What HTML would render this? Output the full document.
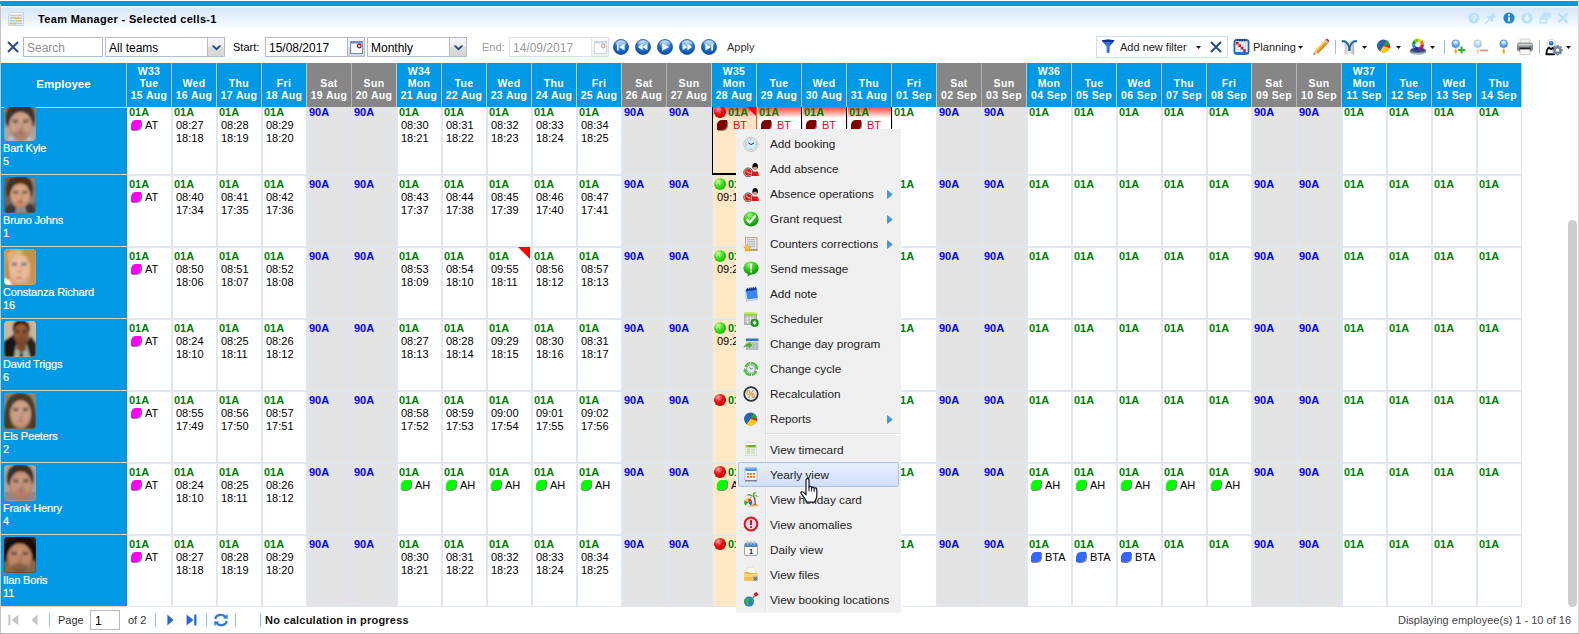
<!DOCTYPE html>
<html><head><meta charset="utf-8"><title>Team Manager</title>
<style>
*{box-sizing:border-box;margin:0;padding:0}
html,body{width:1579px;height:634px;overflow:hidden;background:#fff}
body{position:relative;font-family:"Liberation Sans",sans-serif;font-size:11px;color:#000}
div,i,span,svg{position:absolute}
span{position:static}
.topblue{left:0;top:1px;width:1579px;height:5px;background:#0099e5}
.titlebar{left:1px;top:6px;width:1577px;height:26px;background:linear-gradient(#ffffff 0px,#d6e7fa 2px,#e3effc 10px,#ffffff 24px)}
.lborder{left:0;top:4px;width:1px;height:630px;background:#c4c4c4}
.rborder{left:1578px;top:1px;width:1px;height:633px;background:#d8d8d8}
.bborder{left:0;top:633px;width:1579px;height:1px;background:#b4b4b4}
.title{left:38px;top:12px;letter-spacing:.33px;font-size:11px;font-weight:bold;color:#000;white-space:nowrap;line-height:14px}
/* header */
.hdr{top:63px;height:44px;background:#0099e5;color:#fff;font-weight:bold;font-size:10.5px;text-align:center}
.hdr.we{background:#868686}
.hsep{top:63px;width:1px;height:44px;background:#c6c6c6}
.hsep.wes{background:#b4b4b4}
.ht{left:-10px;right:-10px;top:2px;line-height:12px;white-space:nowrap;position:absolute;letter-spacing:.35px}
.hemp{left:0;right:0;top:15px;font-size:11.5px;line-height:13px}
/* grid */
.grid{left:0;top:107px;width:1567px;height:500px;overflow:hidden}
.wecol{top:0;width:44px;height:500px;background:#e4e4e4}
.peach{top:0;width:43px;height:500px;background:#ffe8c6}
.vl{top:0;width:2px;height:500px;background:#dfe7f6}
.hl{left:127px;width:1395px;height:2px;background:#dfe7f6}
.empcol{left:1px;top:0;width:126px;height:500px;background:#0099e5}
.empline{left:1px;width:126px;height:1px;background:#c9d3da}
.emp{left:1px;width:126px;height:72px;color:#fff}
.face{left:3px;top:2px;width:32px;height:36px;border-radius:4px;overflow:hidden;background:#987}
.ename{left:2px;top:39px;font-size:11px;line-height:13px;white-space:nowrap;letter-spacing:-.15px;-webkit-text-stroke:.2px #fff}
.c{width:43px;height:70px;padding:3px 0 0 2px;font-size:11px;line-height:13px;white-space:nowrap;font-weight:bold;overflow:visible}
.c.g{color:#008000}
.c.b{color:#0000ff}
.tm{font-weight:normal;color:#000;margin-left:2px}
.lt{font-weight:normal;color:#000;margin-left:4px}
.lf{position:relative;display:inline-block;width:10px;height:10px;border-radius:5px 0 5px 0;vertical-align:-1px;margin-left:2px;box-shadow:1px 1px 0 #888}
.flag{position:absolute;right:0;top:0;width:0;height:0;border-top:12px solid #ff0000;border-left:12px solid transparent}
.ball{position:absolute;left:1px;top:3px;width:12px;height:12px;border-radius:6px}
.rb{background:radial-gradient(circle at 35% 28%,#ffa8a8 0,#e81414 38%,#a00000 100%)}
.gb{background:radial-gradient(circle at 35% 30%,#d8ffb0 0,#40e020 40%,#10a000 100%)}
.redgrad{height:11px;background:linear-gradient(#ee5048,#f37a72 30%,#f9bab4 65%,rgba(255,255,255,0))}
.bl{background:#000}
.sthumb{left:1568px;top:220px;width:9px;height:387px;border-radius:5px;background:#cdcdcd}
/* toolbar */
.inp{top:37px;height:20px;border:1px solid #b5b8c8;background:#fff;overflow:hidden}
.inp.dis{border-color:#dcdee8}
.inp .it{position:absolute;left:3px;top:3px;font-size:12px;line-height:14px;color:#000;white-space:nowrap}
.inp .ph{position:absolute;left:3px;top:3px;font-size:12px;line-height:14px;color:#8f8f8f}
.trg{right:0;top:0;width:17px;height:18px;border-left:1px solid #b5b8c8;background:linear-gradient(#f6f6f6 0,#efefef 45%,#dcdcdc 55%,#d6d6d6 100%)}
.lbl{top:40px;font-size:11px;line-height:14px;white-space:nowrap;color:#000}
/* menu */
.menu{left:736px;top:129px;width:165px;height:484px;background:#f0f0f0}
.msep{left:29px;top:3px;width:1px;height:478px;background:#e0e0e0;border-right:1px solid #fff;width:2px}
.mhl{left:30px;top:304px;width:133px;height:2px;background:#e0e0e0;border-bottom:1px solid #fff}
.mhov{left:2px;top:333px;width:161px;height:25px;background:linear-gradient(#e6effc,#d0e0f8);border:1px solid #a8c4ec;border-radius:2px}
.mi{left:34px;font-size:11.75px;line-height:16px;color:#222;white-space:nowrap}
.tsep{top:40px;width:1px;height:14px;background:#8fc0f4}
.fbox{left:1096px;top:36px;width:132px;height:22px;border:1px solid #d0def0;background:#fff}
/* bottom */
.bsep{top:613px;width:1px;height:14px;background:#8fc0f4}
.blbl{top:613px;font-size:11px;line-height:14px;white-space:nowrap;color:#333}
.binp{left:90px;top:610px;width:30px;height:20px;border:1px solid #b5b8c8;background:#fff}
.binp span{position:absolute;left:4px;top:3px;font-size:12px;line-height:14px}

</style></head>
<body>
<div class="topblue"></div><div class="titlebar"></div><div class="lborder"></div><div class="rborder"></div><div class="bborder"></div><div class="title">Team Manager - Selected cells-1</div>
<!-- toolbar left -->
<svg style="left:6px;top:40px" width="14" height="14" viewBox="0 0 14 14"><path d="M2 2 L12 12 M12 2 L2 12" stroke="#2b4a96" stroke-width="2.1" fill="none"/></svg>
<div class="inp" style="left:23px;width:80px"><span class="ph">Search</span></div>
<div class="inp" style="left:105px;width:120px"><span class="it">All teams</span><div class="trg"><svg width="11" height="7" viewBox="0 0 11 7" style="left:3px;top:7px"><path d="M0.5 0.5 L5.5 5.5 L10.5 0.5 L8 0.5 L5.5 3 L3 0.5 Z" fill="#1f3f8f"/></svg></div></div>
<div class="lbl" style="left:233px">Start:</div>
<div class="inp" style="left:265px;width:100px"><span class="it">15/08/2017</span><div class="trg"><svg width="13" height="13" viewBox="0 0 13 13" style="left:2px;top:3px"><rect x="0.5" y="0.5" width="12" height="12" fill="#f4f4f4" stroke="#6e8fc0"/><rect x="0.5" y="0.5" width="12" height="2" fill="#6e8fc0"/><g fill="#fff"><rect x="2" y="4" width="2" height="2"/><rect x="5" y="4" width="2" height="2"/><rect x="2" y="7" width="2" height="2"/><rect x="5" y="7" width="2" height="2"/><rect x="8" y="7" width="2" height="2"/><rect x="2" y="10" width="2" height="1.5"/><rect x="5" y="10" width="2" height="1.5"/><rect x="8" y="10" width="2" height="1.5"/></g><circle cx="9.3" cy="5" r="1.8" fill="#fff" stroke="#a00000" stroke-width="1.2"/></svg></div></div>
<div class="inp" style="left:367px;width:100px"><span class="it">Monthly</span><div class="trg"><svg width="11" height="7" viewBox="0 0 11 7" style="left:3px;top:7px"><path d="M0.5 0.5 L5.5 5.5 L10.5 0.5 L8 0.5 L5.5 3 L3 0.5 Z" fill="#1f3f8f"/></svg></div></div>
<div class="lbl" style="left:482px;color:#9a9a9a">End:</div>
<div class="inp dis" style="left:509px;width:100px"><span class="it" style="color:#9a9a9a">14/09/2017</span><div class="trg" style="opacity:.35"><svg width="13" height="13" viewBox="0 0 13 13" style="left:2px;top:3px"><rect x="0.5" y="0.5" width="12" height="12" fill="#f4f4f4" stroke="#6e8fc0"/><rect x="0.5" y="0.5" width="12" height="2" fill="#6e8fc0"/><circle cx="9.3" cy="5" r="1.8" fill="#fff" stroke="#a00000" stroke-width="1.2"/></svg></div></div>
<svg width="0" height="0" style="left:0;top:0"><defs>
<radialGradient id="nb" cx="50%" cy="30%" r="75%"><stop offset="0" stop-color="#6fb4ee"/><stop offset="0.55" stop-color="#1d6cc6"/><stop offset="1" stop-color="#0b3f95"/></radialGradient>
<linearGradient id="nbh" x1="0" y1="0" x2="0" y2="1"><stop offset="0" stop-color="#ffffff" stop-opacity=".75"/><stop offset="1" stop-color="#ffffff" stop-opacity="0"/></linearGradient>
</defs></svg>
<svg class="nav" style="left:613px;top:39px" width="16" height="16" viewBox="0 0 16 16"><circle cx="8" cy="8" r="7.6" fill="url(#nb)" stroke="#0b3f95" stroke-width=".6"/><ellipse cx="8" cy="4.6" rx="5.4" ry="3.4" fill="url(#nbh)"/><path d="M4 4.6h1.7v6.8H4zM11.6 4.6v6.8L6.2 8z" fill="#f4f8ff"/></svg>
<svg class="nav" style="left:635px;top:39px" width="16" height="16" viewBox="0 0 16 16"><circle cx="8" cy="8" r="7.6" fill="url(#nb)" stroke="#0b3f95" stroke-width=".6"/><ellipse cx="8" cy="4.6" rx="5.4" ry="3.4" fill="url(#nbh)"/><path d="M7.6 4.8v6.4L2.8 8zM12.4 4.8v6.4L7.6 8z" fill="#f4f8ff"/></svg>
<svg class="nav" style="left:657px;top:39px" width="16" height="16" viewBox="0 0 16 16"><circle cx="8" cy="8" r="7.6" fill="url(#nb)" stroke="#0b3f95" stroke-width=".6"/><ellipse cx="8" cy="4.6" rx="5.4" ry="3.4" fill="url(#nbh)"/><path d="M5.2 4.2v7.6L12.2 8z" fill="#f4f8ff"/></svg>
<svg class="nav" style="left:679px;top:39px" width="16" height="16" viewBox="0 0 16 16"><circle cx="8" cy="8" r="7.6" fill="url(#nb)" stroke="#0b3f95" stroke-width=".6"/><ellipse cx="8" cy="4.6" rx="5.4" ry="3.4" fill="url(#nbh)"/><path d="M3.6 4.8v6.4L8.4 8zM8.4 4.8v6.4L13.2 8z" fill="#f4f8ff"/></svg>
<svg class="nav" style="left:701px;top:39px" width="16" height="16" viewBox="0 0 16 16"><circle cx="8" cy="8" r="7.6" fill="url(#nb)" stroke="#0b3f95" stroke-width=".6"/><ellipse cx="8" cy="4.6" rx="5.4" ry="3.4" fill="url(#nbh)"/><path d="M10.3 4.6H12v6.8h-1.7zM4.4 4.6v6.8L9.8 8z" fill="#f4f8ff"/></svg>
<div class="lbl" style="left:727px;color:#333">Apply</div>
<!--TBRIGHT-->
<div class="fbox"></div>
<svg style="left:1101px;top:39px" width="15" height="15" viewBox="0 0 15 15"><defs><linearGradient id="fn" x1="0" y1="0" x2="1" y2="0"><stop offset="0" stop-color="#1848c8"/><stop offset=".45" stop-color="#3a78ec"/><stop offset="1" stop-color="#0c34a4"/></linearGradient></defs><path d="M0.6 1.6 C0.6 0.4 13.6 0.4 13.6 1.6 L8.6 7.6 V13 C8.6 14.4 5.6 14.4 5.6 13 V7.6Z" fill="url(#fn)"/><ellipse cx="7.1" cy="1.8" rx="6.2" ry="1.3" fill="#0a2f98"/></svg>
<div class="lbl" style="left:1120px;color:#222">Add new filter</div>
<svg style="left:1196px;top:46px" width="5" height="3" viewBox="0 0 5 3"><path d="M0 0H5L2.5 3Z" fill="#111"/></svg>
<svg style="left:1209px;top:40px" width="14" height="14" viewBox="0 0 14 14"><path d="M2 2 L12 12 M12 2 L2 12" stroke="#2b4a96" stroke-width="2" fill="none"/></svg>
<svg style="left:1233px;top:38px" width="17" height="17" viewBox="0 0 17 17"><rect x="1" y="1.4" width="15" height="15" rx="2.4" fill="#3a6fb8" stroke="#1d4a8c" stroke-width=".8"/><rect x="2.4" y="3.4" width="12.2" height="10.6" fill="#eef2f8"/><g stroke="#c2cad8" stroke-width=".6"><path d="M5 3.4v10.6M7.6 3.4v10.6M10.2 3.4v10.6M12.6 3.4v10.6"/></g><g fill="#222"><rect x="4" y="1" width="1" height="2"/><rect x="6.4" y="1" width="1" height="2"/><rect x="8.8" y="1" width="1" height="2"/><rect x="11.2" y="1" width="1" height="2"/></g><path d="M3 4 h2.6 v2.4 h2.4 v2.4 h2.4 v2.4 h2.4 v2.8 h-2.6 v-2.6 h-2.4 v-2.4 h-2.4 v-2.4 h-2.4Z" fill="#e01420"/></svg>
<div class="lbl" style="left:1253px;color:#222">Planning</div>
<svg style="left:1298px;top:46px" width="5" height="3" viewBox="0 0 5 3"><path d="M0 0H5L2.5 3Z" fill="#111"/></svg>
<svg style="left:1312px;top:38px" width="18" height="18" viewBox="0 0 18 18"><path d="M1.4 16.8 L3 12.2 L6 15.2Z" fill="#e8c08a"/><path d="M1.4 16.8 L2 15 L3.2 16.2Z" fill="#333"/><path d="M3 12.2 L13 2.2 L16 5.2 L6 15.2Z" fill="#f4a628"/><path d="M3 12.2 L13 2.2 L14 3.2 L4 13.2Z" fill="#fad27a"/><path d="M5 14.2 L15 4.2 L16 5.2 L6 15.2Z" fill="#d6861a"/><path d="M12.4 2.8 L13.6 1.6 L16.6 4.6 L15.4 5.8Z" fill="#c8c8c8"/><path d="M13.6 1.6 L14.4 0.8 C15.4 0.2 17.6 2.4 17.2 3.6 L16.6 4.6Z" fill="#e8202a"/></svg>
<div class="tsep" style="left:1335px"></div>
<svg style="left:1341px;top:38px" width="17" height="18" viewBox="0 0 17 18"><defs><linearGradient id="yb" x1="0" y1="0" x2="1" y2="0"><stop offset="0" stop-color="#c8c8c8"/><stop offset=".5" stop-color="#f0f0f0"/><stop offset="1" stop-color="#b4b4b4"/></linearGradient></defs><rect x="3.6" y="4" width="9.6" height="12.6" fill="url(#yb)"/><path d="M0.6 2.6 C4 1.6 7 3.4 8.4 7.4 C9.8 3.4 12.8 1.6 16.2 2.6 L15.8 4.2 C12.8 3.8 10.2 5.8 9.6 9.6 V13 H7.2 V9.6 C6.6 5.8 4 3.8 1 4.2Z" fill="#1f5f94"/><path d="M0.6 2.6 C4 1.6 7 3.4 8.4 7.4 C9.8 3.4 12.8 1.6 16.2 2.6 L16 3.2 C12.8 2.6 10 4.4 8.4 8.6 C6.8 4.4 4 2.6 0.8 3.2Z" fill="#3f8fd0"/></svg>
<svg style="left:1362px;top:46px" width="5" height="3" viewBox="0 0 5 3"><path d="M0 0H5L2.5 3Z" fill="#111"/></svg>
<svg style="left:1376px;top:38px" width="16" height="16" viewBox="0 0 16 16"><circle cx="7.5" cy="8" r="6.5" fill="#2a62ad"/><path d="M7.5 8 L10.6 2.3 A6.5 6.5 0 0 1 13.9 7 Z" fill="#2fa33a"/><path d="M7.5 8 L13.9 7 A6.5 6.5 0 0 1 13.8 9.7 Z" fill="#f02020"/><path d="M8 8.6 L14.3 8 L14.2 10.2 Z" fill="#f02020"/><path d="M7.5 8 L13.7 9.9 A6.5 6.5 0 0 1 3.6 13.2 Z" fill="#fbc81a"/></svg>
<svg style="left:1396px;top:46px" width="5" height="3" viewBox="0 0 5 3"><path d="M0 0H5L2.5 3Z" fill="#111"/></svg>
<svg style="left:1409px;top:38px" width="18" height="18" viewBox="0 0 18 18"><defs><linearGradient id="cb" x1="0" y1="0" x2="0" y2="1"><stop offset="0" stop-color="#aab4c8"/><stop offset=".5" stop-color="#5a6a8a"/><stop offset="1" stop-color="#c8d0e0"/></linearGradient></defs><ellipse cx="9" cy="13" rx="8.4" ry="4" fill="url(#cb)"/><ellipse cx="9" cy="12" rx="6.6" ry="2.6" fill="#3a4a78"/><path d="M9 6.6 L9.00 0.60 A6 6 0 0 1 13.24 2.36 Z" fill="#f4d21a"/><path d="M9 6.6 L13.24 2.36 A6 6 0 0 1 15.00 6.60 Z" fill="#f47a14"/><path d="M9 6.6 L15.00 6.60 A6 6 0 0 1 13.24 10.84 Z" fill="#e8141a"/><path d="M9 6.6 L13.24 10.84 A6 6 0 0 1 9.00 12.60 Z" fill="#8a1a9a"/><path d="M9 6.6 L9.00 12.60 A6 6 0 0 1 4.76 10.84 Z" fill="#1a2ab0"/><path d="M9 6.6 L4.76 10.84 A6 6 0 0 1 3.00 6.60 Z" fill="#1a8ae8"/><path d="M9 6.6 L3.00 6.60 A6 6 0 0 1 4.76 2.36 Z" fill="#1a9a2a"/><path d="M9 6.6 L4.76 2.36 A6 6 0 0 1 9.00 0.60 Z" fill="#6ac81a"/><circle cx="9" cy="6.6" r="2.7" fill="#fdfdfd"/></svg>
<svg style="left:1430px;top:46px" width="5" height="3" viewBox="0 0 5 3"><path d="M0 0H5L2.5 3Z" fill="#111"/></svg>
<div class="tsep" style="left:1444px"></div>
<svg style="left:1451px;top:39px;opacity:1" width="16" height="16" viewBox="0 0 16 16"><defs><radialGradient id="lens1451" cx="50%" cy="35%" r="70%"><stop offset="0" stop-color="#cfe6ff"/><stop offset=".6" stop-color="#5fa4f4"/><stop offset="1" stop-color="#2f7be0"/></radialGradient></defs><rect x="4.1" y="8" width="1.2" height="3" fill="#c8c8c8"/><rect x="3.6" y="10.2" width="2.2" height="4.6" rx="1" fill="#f7a81a"/><circle cx="4.7" cy="4.7" r="3.9" fill="url(#lens1451)" stroke="#4a90e8" stroke-width=".5"/><ellipse cx="4.7" cy="3.4" rx="2.4" ry="1.3" fill="#fff" opacity=".5"/><path d="M10.6 7.4v7.2M7 11h7.2" stroke="#2fb41f" stroke-width="2.2"/></svg>
<svg style="left:1473px;top:39px;opacity:.5" width="16" height="16" viewBox="0 0 16 16"><defs><radialGradient id="lens1473" cx="50%" cy="35%" r="70%"><stop offset="0" stop-color="#cfe6ff"/><stop offset=".6" stop-color="#5fa4f4"/><stop offset="1" stop-color="#2f7be0"/></radialGradient></defs><rect x="4.1" y="8" width="1.2" height="3" fill="#c8c8c8"/><rect x="3.6" y="10.2" width="2.2" height="4.6" rx="1" fill="#f7a81a"/><circle cx="4.7" cy="4.7" r="3.9" fill="url(#lens1473)" stroke="#4a90e8" stroke-width=".5"/><ellipse cx="4.7" cy="3.4" rx="2.4" ry="1.3" fill="#fff" opacity=".5"/><path d="M7 11.4h8" stroke="#e8283a" stroke-width="1.8"/></svg>
<svg style="left:1499px;top:39px;opacity:1" width="16" height="16" viewBox="0 0 16 16"><defs><radialGradient id="lens1499" cx="50%" cy="35%" r="70%"><stop offset="0" stop-color="#cfe6ff"/><stop offset=".6" stop-color="#5fa4f4"/><stop offset="1" stop-color="#2f7be0"/></radialGradient></defs><rect x="4.1" y="8" width="1.2" height="3" fill="#c8c8c8"/><rect x="3.6" y="10.2" width="2.2" height="4.6" rx="1" fill="#f7a81a"/><circle cx="4.7" cy="4.7" r="3.9" fill="url(#lens1499)" stroke="#4a90e8" stroke-width=".5"/><ellipse cx="4.7" cy="3.4" rx="2.4" ry="1.3" fill="#fff" opacity=".5"/></svg>
<svg style="left:1517px;top:38px" width="16" height="18" viewBox="0 0 16 18"><rect x="3" y="1" width="10" height="5" fill="#f0f2f0" stroke="#b8bcb8" stroke-width=".6"/><rect x="0.6" y="5" width="14.8" height="8" rx="1.4" fill="#8e8e8e" stroke="#5a5a5a" stroke-width=".6"/><rect x="0.9" y="5.4" width="14.2" height="2.4" rx="1" fill="#c8c8c8"/><rect x="2.4" y="9.6" width="11.2" height="2.6" fill="#1a1a1a"/><rect x="3" y="11.4" width="10" height="5.4" fill="#f6f6f6" stroke="#b4b4b4" stroke-width=".6"/><rect x="12.4" y="7.6" width="1.8" height="1" fill="#3a78e8"/><rect x="12.8" y="9" width="1.2" height=".8" fill="#2aaa2a"/></svg>
<div class="tsep" style="left:1539px"></div>
<svg style="left:1545px;top:38px" width="18" height="18" viewBox="0 0 18 18"><circle cx="6.2" cy="5.4" r="4.3" fill="#fbfbfb" stroke="#cfcfcf" stroke-width=".9"/><circle cx="6.2" cy="5.2" r="2.2" fill="#1560d8"/><circle cx="6.2" cy="4.8" r="1" fill="#5ab0ff"/><path d="M1.4 16.2 C1.6 12 2.6 10.2 4 9.6 L6.2 11.2 L8.4 9.6 C9.4 10 10 10.8 10.2 11.6 L9.4 16.2Z" fill="#fdfdfd" stroke="#0a0a0a" stroke-width="1.9" stroke-linejoin="round"/><g transform="translate(12.6 12.2)"><g fill="#7088a4"><rect x="-1.3" y="-5.2" width="2.6" height="10.4" rx=".6" transform="rotate(0)"/><rect x="-1.3" y="-5.2" width="2.6" height="10.4" rx=".6" transform="rotate(45)"/><rect x="-1.3" y="-5.2" width="2.6" height="10.4" rx=".6" transform="rotate(90)"/><rect x="-1.3" y="-5.2" width="2.6" height="10.4" rx=".6" transform="rotate(135)"/></g><circle r="3.7" fill="#7088a4"/><circle r="1.6" fill="#fff"/></g></svg>
<svg style="left:1566px;top:46px" width="5" height="3" viewBox="0 0 5 3"><path d="M0 0H5L2.5 3Z" fill="#111"/></svg>
<svg style="left:1468px;top:12px" width="12" height="12" viewBox="0 0 12 12" fill="#b9e2fa" stroke="none"><circle cx="6" cy="6" r="5.6"/><text x="6" y="9.4" font-family="Liberation Sans" font-weight="bold" font-size="9.5" text-anchor="middle" fill="#eef7fe">?</text></svg>
<svg style="left:1485px;top:12px" width="12" height="12" viewBox="0 0 12 12" fill="#b9e2fa" stroke="none"><path d="M7 0.2 L11.8 5 L10.4 5.8 L9.2 5.4 L7.8 7.2 L8 9.2 L6.8 10 L4.9 8.1 L0.9 12 L0 11.1 L3.9 7.1 L2 5.2 L2.8 4 L4.8 4.2 L6.6 2.8 L6.2 1.6Z"/></svg>
<svg style="left:1503px;top:12px" width="12" height="12" viewBox="0 0 12 12" fill="#2486c6" stroke="none"><circle cx="6" cy="6" r="5.6"/><rect x="5.2" y="4.8" width="1.7" height="4.6" fill="#fff"/><circle cx="6.05" cy="3" r="1" fill="#fff"/></svg>
<svg style="left:1521px;top:12px" width="12" height="12" viewBox="0 0 12 12" fill="#b9e2fa" stroke="none"><circle cx="6" cy="6" r="5.6"/><path d="M4.8 2.6 H7.2 V5.6 H9.2 L6 9.4 L2.8 5.6 H4.8Z" fill="#f2f9fe"/></svg>
<svg style="left:1539px;top:12px" width="12" height="12" viewBox="0 0 12 12" fill="#b9e2fa" stroke="none"><path d="M4 0.6 H11.4 V6 H10 V2.6 H4Z M2.4 2.8 H9.6 V8 H8.4 V5 H2.4Z M0.6 5.4 H8 V11.4 H0.6Z M1.8 7.6 V10.2 H6.8 V7.6Z" fill-rule="evenodd"/></svg>
<svg style="left:1557px;top:12px" width="12" height="12" viewBox="0 0 12 12" fill="#b9e2fa" stroke="none"><path d="M0.6 2.4 L2.4 0.6 L6 4.2 L9.6 0.6 L11.4 2.4 L7.8 6 L11.4 9.6 L9.6 11.4 L6 7.8 L2.4 11.4 L0.6 9.6 L4.2 6Z"/></svg>
<svg style="left:8px;top:12px" width="16" height="15" viewBox="0 0 16 15"><path d="M2.4 0.5 H15.5 V13.5 H0.5 V2.4Z" fill="#fdfdfd" stroke="#c8ccd2" stroke-width=".8"/><rect x="1.4" y="2.6" width="13.2" height="1.8" fill="#c4c8d0"/><g fill="#9fd4f6"><rect x="1.4" y="5" width="13.2" height="1.8"/><rect x="1.4" y="7.8" width="13.2" height="1.8"/><rect x="1.4" y="10.6" width="13.2" height="1.8"/></g><g fill="#fbb92a"><rect x="6.2" y="5" width="4.8" height="1.8"/><rect x="8" y="7.8" width="1.4" height="1.8"/><rect x="11" y="7.8" width="2" height="1.8"/><rect x="1.4" y="10.6" width="2" height="1.8"/><rect x="5" y="10.6" width="3" height="1.8"/></g></svg>
<div class="hdr" style="left:1px;width:125px;background:#0099e5"><div class="hemp">Employee</div></div><div class="hsep" style="left:126px"></div><div class="hdr" style="left:127px;width:44px"><div class="ht">W33<br>Tue<br>15 Aug</div></div><div class="hsep" style="left:171px"></div><div class="hdr" style="left:172px;width:44px"><div class="ht">&nbsp;<br>Wed<br>16 Aug</div></div><div class="hsep" style="left:216px"></div><div class="hdr" style="left:217px;width:44px"><div class="ht">&nbsp;<br>Thu<br>17 Aug</div></div><div class="hsep" style="left:261px"></div><div class="hdr" style="left:262px;width:44px"><div class="ht">&nbsp;<br>Fri<br>18 Aug</div></div><div class="hsep" style="left:306px"></div><div class="hdr we" style="left:307px;width:44px"><div class="ht">&nbsp;<br>Sat<br>19 Aug</div></div><div class="hsep wes" style="left:351px"></div><div class="hdr we" style="left:352px;width:44px"><div class="ht">&nbsp;<br>Sun<br>20 Aug</div></div><div class="hsep" style="left:396px"></div><div class="hdr" style="left:397px;width:44px"><div class="ht">W34<br>Mon<br>21 Aug</div></div><div class="hsep" style="left:441px"></div><div class="hdr" style="left:442px;width:44px"><div class="ht">&nbsp;<br>Tue<br>22 Aug</div></div><div class="hsep" style="left:486px"></div><div class="hdr" style="left:487px;width:44px"><div class="ht">&nbsp;<br>Wed<br>23 Aug</div></div><div class="hsep" style="left:531px"></div><div class="hdr" style="left:532px;width:44px"><div class="ht">&nbsp;<br>Thu<br>24 Aug</div></div><div class="hsep" style="left:576px"></div><div class="hdr" style="left:577px;width:44px"><div class="ht">&nbsp;<br>Fri<br>25 Aug</div></div><div class="hsep" style="left:621px"></div><div class="hdr we" style="left:622px;width:44px"><div class="ht">&nbsp;<br>Sat<br>26 Aug</div></div><div class="hsep wes" style="left:666px"></div><div class="hdr we" style="left:667px;width:44px"><div class="ht">&nbsp;<br>Sun<br>27 Aug</div></div><div class="hsep" style="left:711px"></div><div class="hdr" style="left:712px;width:44px"><div class="ht">W35<br>Mon<br>28 Aug</div></div><div class="hsep" style="left:756px"></div><div class="hdr" style="left:757px;width:44px"><div class="ht">&nbsp;<br>Tue<br>29 Aug</div></div><div class="hsep" style="left:801px"></div><div class="hdr" style="left:802px;width:44px"><div class="ht">&nbsp;<br>Wed<br>30 Aug</div></div><div class="hsep" style="left:846px"></div><div class="hdr" style="left:847px;width:44px"><div class="ht">&nbsp;<br>Thu<br>31 Aug</div></div><div class="hsep" style="left:891px"></div><div class="hdr" style="left:892px;width:44px"><div class="ht">&nbsp;<br>Fri<br>01 Sep</div></div><div class="hsep" style="left:936px"></div><div class="hdr we" style="left:937px;width:44px"><div class="ht">&nbsp;<br>Sat<br>02 Sep</div></div><div class="hsep wes" style="left:981px"></div><div class="hdr we" style="left:982px;width:44px"><div class="ht">&nbsp;<br>Sun<br>03 Sep</div></div><div class="hsep" style="left:1026px"></div><div class="hdr" style="left:1027px;width:44px"><div class="ht">W36<br>Mon<br>04 Sep</div></div><div class="hsep" style="left:1071px"></div><div class="hdr" style="left:1072px;width:44px"><div class="ht">&nbsp;<br>Tue<br>05 Sep</div></div><div class="hsep" style="left:1116px"></div><div class="hdr" style="left:1117px;width:44px"><div class="ht">&nbsp;<br>Wed<br>06 Sep</div></div><div class="hsep" style="left:1161px"></div><div class="hdr" style="left:1162px;width:44px"><div class="ht">&nbsp;<br>Thu<br>07 Sep</div></div><div class="hsep" style="left:1206px"></div><div class="hdr" style="left:1207px;width:44px"><div class="ht">&nbsp;<br>Fri<br>08 Sep</div></div><div class="hsep" style="left:1251px"></div><div class="hdr we" style="left:1252px;width:44px"><div class="ht">&nbsp;<br>Sat<br>09 Sep</div></div><div class="hsep wes" style="left:1296px"></div><div class="hdr we" style="left:1297px;width:44px"><div class="ht">&nbsp;<br>Sun<br>10 Sep</div></div><div class="hsep" style="left:1341px"></div><div class="hdr" style="left:1342px;width:44px"><div class="ht">W37<br>Mon<br>11 Sep</div></div><div class="hsep" style="left:1386px"></div><div class="hdr" style="left:1387px;width:44px"><div class="ht">&nbsp;<br>Tue<br>12 Sep</div></div><div class="hsep" style="left:1431px"></div><div class="hdr" style="left:1432px;width:44px"><div class="ht">&nbsp;<br>Wed<br>13 Sep</div></div><div class="hsep" style="left:1476px"></div><div class="hdr" style="left:1477px;width:44px"><div class="ht">&nbsp;<br>Thu<br>14 Sep</div></div><div class="hsep" style="left:1521px"></div><div class="grid"><div class="wecol" style="left:307px"></div><div class="wecol" style="left:352px"></div><div class="wecol" style="left:622px"></div><div class="wecol" style="left:667px"></div><div class="wecol" style="left:937px"></div><div class="wecol" style="left:982px"></div><div class="wecol" style="left:1252px"></div><div class="wecol" style="left:1297px"></div><div class="peach" style="left:713px"></div><div class="vl" style="left:171px"></div><div class="vl" style="left:216px"></div><div class="vl" style="left:261px"></div><div class="vl" style="left:306px"></div><div class="vl" style="left:351px"></div><div class="vl" style="left:396px"></div><div class="vl" style="left:441px"></div><div class="vl" style="left:486px"></div><div class="vl" style="left:531px"></div><div class="vl" style="left:576px"></div><div class="vl" style="left:621px"></div><div class="vl" style="left:666px"></div><div class="vl" style="left:711px"></div><div class="vl" style="left:756px"></div><div class="vl" style="left:801px"></div><div class="vl" style="left:846px"></div><div class="vl" style="left:891px"></div><div class="vl" style="left:936px"></div><div class="vl" style="left:981px"></div><div class="vl" style="left:1026px"></div><div class="vl" style="left:1071px"></div><div class="vl" style="left:1116px"></div><div class="vl" style="left:1161px"></div><div class="vl" style="left:1206px"></div><div class="vl" style="left:1251px"></div><div class="vl" style="left:1296px"></div><div class="vl" style="left:1341px"></div><div class="vl" style="left:1386px"></div><div class="vl" style="left:1431px"></div><div class="vl" style="left:1476px"></div><div class="vl" style="left:1521px;width:1px"></div><div class="hl" style="top:67px"></div><div class="hl" style="top:139px"></div><div class="hl" style="top:211px"></div><div class="hl" style="top:283px"></div><div class="hl" style="top:355px"></div><div class="hl" style="top:427px"></div><div class="hl" style="top:499px"></div><div class="empcol"></div><div class="empline" style="top:0px"></div><div class="emp" style="top:-4px"><div class="face"><svg width="32" height="36" viewBox="0 0 32 36" style="left:0;top:0"><defs><filter id="fb1" x="-10%" y="-10%" width="120%" height="120%"><feGaussianBlur stdDeviation="0.80"/></filter><radialGradient id="sk1" cx="50%" cy="40%" r="62%"><stop offset="0" stop-color="#c99d86"/><stop offset=".65" stop-color="#c99d86"/><stop offset="1" stop-color="#a97c66"/></radialGradient></defs><rect width="32" height="36" fill="#918a86"/><g filter="url(#fb1)"><rect x="0" y="0" width="32" height="14" fill="#7e7876"/><rect x="0" y="22" width="32" height="14" fill="#aaa6a6"/><path d="M2 18 C0 4 7 -2 16.5 -2 C26 -2 32 4 30.5 18 L28 22 L5 22Z" fill="#3b302d"/><ellipse cx="16.6" cy="21.0" rx="11.6" ry="14.0" fill="url(#sk1)"/><ellipse cx="16.6" cy="29.3" rx="7.2" ry="4.6" fill="#5a3a30" opacity=".18"/><ellipse cx="16.6" cy="14.7" rx="6.4" ry="3.1" fill="#ffffff" opacity=".10"/><ellipse cx="11.5" cy="16.8" rx="3" ry="1" fill="#2a1c18" opacity=".7"/><rect x="8.5" y="14.1" width="6.4" height="1.2" fill="#2a1c18" opacity=".55"/><ellipse cx="21.7" cy="16.8" rx="3" ry="1" fill="#2a1c18" opacity=".7"/><rect x="18.7" y="14.1" width="6.4" height="1.2" fill="#2a1c18" opacity=".55"/><rect x="17.6" y="17.4" width="1.5" height="6.4" fill="#000" opacity=".13"/><ellipse cx="16.6" cy="24.2" rx="2.4" ry=".9" fill="#000" opacity=".22"/><ellipse cx="16.6" cy="27.8" rx="3.5" ry="1" fill="#a05050" opacity=".9"/><path d="M2 36 L8 31 L11 36Z M30 36 L25 31 L22 36Z" fill="#c2c0c6"/></g></svg></div><div class="ename">Bart Kyle<br>5</div></div><div class="empline" style="top:67px"></div><div class="emp" style="top:68px"><div class="face"><svg width="32" height="36" viewBox="0 0 32 36" style="left:0;top:0"><defs><filter id="fb2" x="-10%" y="-10%" width="120%" height="120%"><feGaussianBlur stdDeviation="0.80"/></filter><radialGradient id="sk2" cx="50%" cy="40%" r="62%"><stop offset="0" stop-color="#d6a080"/><stop offset=".65" stop-color="#d6a080"/><stop offset="1" stop-color="#b07a5c"/></radialGradient></defs><rect width="32" height="36" fill="#6a6260"/><g filter="url(#fb2)"><rect x="18" y="0" width="14" height="26" fill="#85807e"/><path d="M0 36 L3 29 L11 26 L22 26 L29 29 L32 36Z" fill="#39383a"/><path d="M11 36 L13 27 L20 27 L23 36Z" fill="#8c8c92"/><path d="M3 18 C0 4 7 -1 16 -1 C26 -1 31 5 28.5 18 L26 21 L6 21Z" fill="#45301f"/><ellipse cx="16.2" cy="18.8" rx="10.2" ry="12.2" fill="url(#sk2)"/><ellipse cx="16.2" cy="13.3" rx="5.6" ry="2.7" fill="#ffffff" opacity=".10"/><ellipse cx="11.7" cy="16.0" rx="3" ry="1" fill="#3a2a22" opacity=".7"/><rect x="8.7" y="13.3" width="6.4" height="1.2" fill="#3a2a22" opacity=".55"/><ellipse cx="20.7" cy="16.0" rx="3" ry="1" fill="#3a2a22" opacity=".7"/><rect x="17.7" y="13.3" width="6.4" height="1.2" fill="#3a2a22" opacity=".55"/><rect x="17.2" y="16.6" width="1.5" height="6.4" fill="#000" opacity=".13"/><ellipse cx="16.2" cy="23.4" rx="2.4" ry=".9" fill="#000" opacity=".22"/><ellipse cx="16.2" cy="25.4" rx="3.5" ry="1" fill="#b45652" opacity=".9"/></g></svg></div><div class="ename">Bruno Johns<br>1</div></div><div class="empline" style="top:139px"></div><div class="emp" style="top:140px"><div class="face"><svg width="32" height="36" viewBox="0 0 32 36" style="left:0;top:0"><defs><filter id="fb3" x="-10%" y="-10%" width="120%" height="120%"><feGaussianBlur stdDeviation="0.80"/></filter><radialGradient id="sk3" cx="50%" cy="40%" r="62%"><stop offset="0" stop-color="#eabb9c"/><stop offset=".65" stop-color="#eabb9c"/><stop offset="1" stop-color="#d09a78"/></radialGradient></defs><rect width="32" height="36" fill="#cfa56c"/><g filter="url(#fb3)"><rect x="0" y="0" width="32" height="36" fill="#cfa268"/><path d="M23 0 L32 0 L32 24 L28 30 L27 12Z" fill="#a8743a"/><path d="M0 0 H32 V36 H25 L27 20 L22 7 L10 5 L5 18 L6 36 H0Z" fill="#c49556"/><ellipse cx="15.2" cy="20.6" rx="11.0" ry="15.6" fill="url(#sk3)"/><ellipse cx="15.2" cy="13.6" rx="6.1" ry="3.4" fill="#ffffff" opacity=".10"/><ellipse cx="10.4" cy="15.8" rx="3" ry="1" fill="#3f4352" opacity=".7"/><rect x="7.4" y="13.1" width="6.4" height="1.2" fill="#3f4352" opacity=".55"/><ellipse cx="20.0" cy="15.8" rx="3" ry="1" fill="#3f4352" opacity=".7"/><rect x="17.0" y="13.1" width="6.4" height="1.2" fill="#3f4352" opacity=".55"/><rect x="16.2" y="16.4" width="1.5" height="6.4" fill="#000" opacity=".13"/><ellipse cx="15.2" cy="23.2" rx="2.4" ry=".9" fill="#000" opacity=".22"/><ellipse cx="15.2" cy="28.8" rx="3.5" ry="1" fill="#c96a64" opacity=".9"/><path d="M17 1 C24 3 28.4 10 28 24 L31 24 L31 3 L24 -1Z" fill="#c2904e"/><path d="M3 5 C9 0 14 0 20 2.4 L13 6 L5 14Z" fill="#dcb482"/><path d="M0 36 V29 L5 31 L8 36Z" fill="#fff"/><path d="M4 14 L6 30 L3 30 L2 16Z" fill="#b98848"/></g></svg></div><div class="ename">Constanza Richard<br>16</div></div><div class="empline" style="top:211px"></div><div class="emp" style="top:212px"><div class="face"><svg width="32" height="36" viewBox="0 0 32 36" style="left:0;top:0"><defs><filter id="fb4" x="-10%" y="-10%" width="120%" height="120%"><feGaussianBlur stdDeviation="1.0"/></filter><radialGradient id="sk4" cx="50%" cy="40%" r="62%"><stop offset="0" stop-color="#8b5634"/><stop offset=".65" stop-color="#8b5634"/><stop offset="1" stop-color="#5e3620"/></radialGradient></defs><rect width="32" height="36" fill="#cbbaa0"/><g filter="url(#fb4)"><rect x="0" y="0" width="32" height="36" fill="#c9b89e"/><path d="M0 36 V20 L9 14 L14 22 L11 36Z" fill="#181514"/><path d="M32 36 V22 L27 15 L22 22 L25 36Z" fill="#26221f"/><path d="M10 36 L12 24 L23 24 L26 36Z" fill="#a9a9a6"/><path d="M12.6 18 H22 V29 L17.4 31 L12.6 28Z" fill="#7a4a2c"/><path d="M8.6 9 C8.6 0.6 12 -0.6 17 -0.6 C22.6 -0.6 26.4 1.6 25.8 10 L23.6 12 L10.4 12Z" fill="#181210"/><ellipse cx="17.2" cy="13.0" rx="8.2" ry="10.6" fill="url(#sk4)"/><ellipse cx="17.2" cy="8.2" rx="4.5" ry="2.3" fill="#ffffff" opacity=".10"/><ellipse cx="13.6" cy="10.6" rx="3" ry="1" fill="#120a08" opacity=".5"/><rect x="10.6" y="7.9" width="6.4" height="1.2" fill="#120a08" opacity=".3"/><ellipse cx="20.8" cy="10.6" rx="3" ry="1" fill="#120a08" opacity=".5"/><rect x="17.8" y="7.9" width="6.4" height="1.2" fill="#120a08" opacity=".3"/><rect x="18.2" y="11.2" width="1.5" height="6.4" fill="#000" opacity=".13"/><ellipse cx="17.2" cy="18.0" rx="2.4" ry=".9" fill="#000" opacity=".22"/><ellipse cx="17.2" cy="19.4" rx="3.5" ry="1" fill="#8a4646" opacity=".9"/><path d="M15 36 L17.4 28 L19.6 36Z" fill="#4a3026"/></g></svg></div><div class="ename">David Triggs<br>6</div></div><div class="empline" style="top:283px"></div><div class="emp" style="top:284px"><div class="face"><svg width="32" height="36" viewBox="0 0 32 36" style="left:0;top:0"><defs><filter id="fb5" x="-10%" y="-10%" width="120%" height="120%"><feGaussianBlur stdDeviation="0.80"/></filter><radialGradient id="sk5" cx="50%" cy="40%" r="62%"><stop offset="0" stop-color="#cc9e86"/><stop offset=".65" stop-color="#cc9e86"/><stop offset="1" stop-color="#a87c64"/></radialGradient></defs><rect width="32" height="36" fill="#8a8872"/><g filter="url(#fb5)"><rect x="0" y="0" width="32" height="36" fill="#8a8872"/><path d="M3 36 C1 10 7 1 16.4 1 C26 1 31 10 29 36Z" fill="#4f4236"/><path d="M0 36 C-1 8 5 0 16 0 C28 0 33 8 32 36 L25 36 L27 18 L16.5 7 L6 18 L8 36Z" fill="#473a2e"/><ellipse cx="16.6" cy="21.4" rx="10.6" ry="14.2" fill="url(#sk5)"/><ellipse cx="16.6" cy="15.0" rx="5.8" ry="3.1" fill="#ffffff" opacity=".10"/><ellipse cx="11.9" cy="17.2" rx="3" ry="1" fill="#2a1c18" opacity=".7"/><rect x="8.9" y="14.5" width="6.4" height="1.2" fill="#2a1c18" opacity=".55"/><ellipse cx="21.3" cy="17.2" rx="3" ry="1" fill="#2a1c18" opacity=".7"/><rect x="18.3" y="14.5" width="6.4" height="1.2" fill="#2a1c18" opacity=".55"/><rect x="17.6" y="17.8" width="1.5" height="6.4" fill="#000" opacity=".13"/><ellipse cx="16.6" cy="24.6" rx="2.4" ry=".9" fill="#000" opacity=".22"/><ellipse cx="16.6" cy="28.0" rx="3.5" ry="1" fill="#b86c66" opacity=".9"/></g></svg></div><div class="ename">Els Peeters<br>2</div></div><div class="empline" style="top:355px"></div><div class="emp" style="top:356px"><div class="face"><svg width="32" height="36" viewBox="0 0 32 36" style="left:0;top:0"><defs><filter id="fb6" x="-10%" y="-10%" width="120%" height="120%"><feGaussianBlur stdDeviation="0.80"/></filter><radialGradient id="sk6" cx="50%" cy="40%" r="62%"><stop offset="0" stop-color="#c6917a"/><stop offset=".65" stop-color="#c6917a"/><stop offset="1" stop-color="#a06e58"/></radialGradient></defs><rect width="32" height="36" fill="#a59e97"/><g filter="url(#fb6)"><rect x="0" y="0" width="32" height="36" fill="#a8a19b"/><rect x="0" y="27" width="32" height="9" fill="#8c888a"/><path d="M3 18 C1 4 8 -1 16.6 -1 C26 -1 31 5 29.4 18 L27 21 L5.6 21Z" fill="#37302e"/><ellipse cx="16.8" cy="21.0" rx="11.2" ry="14.6" fill="url(#sk6)"/><ellipse cx="16.8" cy="28.5" rx="6.9" ry="4.6" fill="#6a4a40" opacity=".18"/><ellipse cx="16.8" cy="14.4" rx="6.2" ry="3.2" fill="#ffffff" opacity=".10"/><ellipse cx="11.9" cy="16.6" rx="3" ry="1" fill="#2a1c18" opacity=".7"/><rect x="8.9" y="13.9" width="6.4" height="1.2" fill="#2a1c18" opacity=".55"/><ellipse cx="21.7" cy="16.6" rx="3" ry="1" fill="#2a1c18" opacity=".7"/><rect x="18.7" y="13.9" width="6.4" height="1.2" fill="#2a1c18" opacity=".55"/><rect x="17.8" y="17.2" width="1.5" height="6.4" fill="#000" opacity=".13"/><ellipse cx="16.8" cy="24.0" rx="2.4" ry=".9" fill="#000" opacity=".22"/><ellipse cx="16.8" cy="27.0" rx="3.5" ry="1" fill="#b26a64" opacity=".9"/></g></svg></div><div class="ename">Frank Henry<br>4</div></div><div class="empline" style="top:427px"></div><div class="emp" style="top:428px"><div class="face"><svg width="32" height="36" viewBox="0 0 32 36" style="left:0;top:0"><defs><filter id="fb7" x="-10%" y="-10%" width="120%" height="120%"><feGaussianBlur stdDeviation="0.80"/></filter><radialGradient id="sk7" cx="50%" cy="40%" r="62%"><stop offset="0" stop-color="#bd8666"/><stop offset=".65" stop-color="#bd8666"/><stop offset="1" stop-color="#8c5c42"/></radialGradient></defs><rect width="32" height="36" fill="#33241f"/><g filter="url(#fb7)"><rect x="0" y="0" width="32" height="36" fill="#33251f"/><rect x="0" y="24" width="32" height="12" fill="#866650"/><path d="M-1 22 C-2 4 5 -1 16 -1 C28 -1 33 4 32 20 L28 23 L3 25Z" fill="#17100e"/><ellipse cx="15.6" cy="21.2" rx="12.6" ry="14.6" fill="url(#sk7)"/><ellipse cx="15.6" cy="30.5" rx="7.8" ry="4.6" fill="#3a2218" opacity=".35"/><ellipse cx="15.6" cy="14.6" rx="6.9" ry="3.2" fill="#ffffff" opacity=".10"/><ellipse cx="10.1" cy="17.0" rx="3" ry="1" fill="#2a1c18" opacity=".7"/><rect x="7.1" y="14.3" width="6.4" height="1.2" fill="#2a1c18" opacity=".55"/><ellipse cx="21.1" cy="17.0" rx="3" ry="1" fill="#2a1c18" opacity=".7"/><rect x="18.1" y="14.3" width="6.4" height="1.2" fill="#2a1c18" opacity=".55"/><rect x="16.6" y="17.6" width="1.5" height="6.4" fill="#000" opacity=".13"/><ellipse cx="15.6" cy="24.4" rx="2.4" ry=".9" fill="#000" opacity=".22"/><ellipse cx="15.6" cy="29.0" rx="3.5" ry="1" fill="#96564c" opacity=".9"/></g></svg></div><div class="ename">Ilan Boris<br>11</div></div><div class="empline" style="top:499px"></div><div class="c g" style="left:127px;top:-4px">01A<br><i class="lf" style="background:#ff00ff"></i><span class="lt">AT</span></div><div class="c g" style="left:172px;top:-4px">01A<br><span class="tm">08:27</span><br><span class="tm">18:18</span></div><div class="c g" style="left:217px;top:-4px">01A<br><span class="tm">08:28</span><br><span class="tm">18:19</span></div><div class="c g" style="left:262px;top:-4px">01A<br><span class="tm">08:29</span><br><span class="tm">18:20</span></div><div class="c b" style="left:307px;top:-4px">90A</div><div class="c b" style="left:352px;top:-4px">90A</div><div class="c g" style="left:397px;top:-4px">01A<br><span class="tm">08:30</span><br><span class="tm">18:21</span></div><div class="c g" style="left:442px;top:-4px">01A<br><span class="tm">08:31</span><br><span class="tm">18:22</span></div><div class="c g" style="left:487px;top:-4px">01A<br><span class="tm">08:32</span><br><span class="tm">18:23</span></div><div class="c g" style="left:532px;top:-4px">01A<br><span class="tm">08:33</span><br><span class="tm">18:24</span></div><div class="c g" style="left:577px;top:-4px">01A<br><span class="tm">08:34</span><br><span class="tm">18:25</span></div><div class="c b" style="left:622px;top:-4px">90A</div><div class="c b" style="left:667px;top:-4px">90A</div><div class="redgrad" style="left:713px;top:0px;width:43px"></div><div class="c g" style="left:713px;top:-4px"><i class="ball rb"></i><span style="margin-left:13px">01A</span><br><i class="lf" style="background:#800000"></i><span class="lt" style="color:#f00020;margin-left:6px">BT</span></div><div class="redgrad" style="left:758px;top:0px;width:44px"></div><div class="c g" style="left:757px;top:-4px">01A<br><i class="lf" style="background:#800000"></i><span class="lt" style="color:#f00020;margin-left:6px">BT</span></div><div class="redgrad" style="left:803px;top:0px;width:44px"></div><div class="c g" style="left:802px;top:-4px">01A<br><i class="lf" style="background:#800000"></i><span class="lt" style="color:#f00020;margin-left:6px">BT</span></div><div class="redgrad" style="left:848px;top:0px;width:44px"></div><div class="c g" style="left:847px;top:-4px">01A<br><i class="lf" style="background:#800000"></i><span class="lt" style="color:#f00020;margin-left:6px">BT</span></div><div class="c g" style="left:892px;top:-4px">01A</div><div class="c b" style="left:937px;top:-4px">90A</div><div class="c b" style="left:982px;top:-4px">90A</div><div class="c g" style="left:1027px;top:-4px">01A</div><div class="c g" style="left:1072px;top:-4px">01A</div><div class="c g" style="left:1117px;top:-4px">01A</div><div class="c g" style="left:1162px;top:-4px">01A</div><div class="c g" style="left:1207px;top:-4px">01A</div><div class="c b" style="left:1252px;top:-4px">90A</div><div class="c b" style="left:1297px;top:-4px">90A</div><div class="c g" style="left:1342px;top:-4px">01A</div><div class="c g" style="left:1387px;top:-4px">01A</div><div class="c g" style="left:1432px;top:-4px">01A</div><div class="c g" style="left:1477px;top:-4px">01A</div><div class="c g" style="left:127px;top:68px">01A<br><i class="lf" style="background:#ff00ff"></i><span class="lt">AT</span></div><div class="c g" style="left:172px;top:68px">01A<br><span class="tm">08:40</span><br><span class="tm">17:34</span></div><div class="c g" style="left:217px;top:68px">01A<br><span class="tm">08:41</span><br><span class="tm">17:35</span></div><div class="c g" style="left:262px;top:68px">01A<br><span class="tm">08:42</span><br><span class="tm">17:36</span></div><div class="c b" style="left:307px;top:68px">90A</div><div class="c b" style="left:352px;top:68px">90A</div><div class="c g" style="left:397px;top:68px">01A<br><span class="tm">08:43</span><br><span class="tm">17:37</span></div><div class="c g" style="left:442px;top:68px">01A<br><span class="tm">08:44</span><br><span class="tm">17:38</span></div><div class="c g" style="left:487px;top:68px">01A<br><span class="tm">08:45</span><br><span class="tm">17:39</span></div><div class="c g" style="left:532px;top:68px">01A<br><span class="tm">08:46</span><br><span class="tm">17:40</span></div><div class="c g" style="left:577px;top:68px">01A<br><span class="tm">08:47</span><br><span class="tm">17:41</span></div><div class="c b" style="left:622px;top:68px">90A</div><div class="c b" style="left:667px;top:68px">90A</div><div class="c g" style="left:713px;top:68px"><i class="ball gb"></i><span style="margin-left:13px">01A</span><br><span class="tm">09:17</span></div><div class="c g" style="left:757px;top:68px">01A</div><div class="c g" style="left:802px;top:68px">01A</div><div class="c g" style="left:847px;top:68px">01A</div><div class="c g" style="left:892px;top:68px">01A</div><div class="c b" style="left:937px;top:68px">90A</div><div class="c b" style="left:982px;top:68px">90A</div><div class="c g" style="left:1027px;top:68px">01A</div><div class="c g" style="left:1072px;top:68px">01A</div><div class="c g" style="left:1117px;top:68px">01A</div><div class="c g" style="left:1162px;top:68px">01A</div><div class="c g" style="left:1207px;top:68px">01A</div><div class="c b" style="left:1252px;top:68px">90A</div><div class="c b" style="left:1297px;top:68px">90A</div><div class="c g" style="left:1342px;top:68px">01A</div><div class="c g" style="left:1387px;top:68px">01A</div><div class="c g" style="left:1432px;top:68px">01A</div><div class="c g" style="left:1477px;top:68px">01A</div><div class="c g" style="left:127px;top:140px">01A<br><i class="lf" style="background:#ff00ff"></i><span class="lt">AT</span></div><div class="c g" style="left:172px;top:140px">01A<br><span class="tm">08:50</span><br><span class="tm">18:06</span></div><div class="c g" style="left:217px;top:140px">01A<br><span class="tm">08:51</span><br><span class="tm">18:07</span></div><div class="c g" style="left:262px;top:140px">01A<br><span class="tm">08:52</span><br><span class="tm">18:08</span></div><div class="c b" style="left:307px;top:140px">90A</div><div class="c b" style="left:352px;top:140px">90A</div><div class="c g" style="left:397px;top:140px">01A<br><span class="tm">08:53</span><br><span class="tm">18:09</span></div><div class="c g" style="left:442px;top:140px">01A<br><span class="tm">08:54</span><br><span class="tm">18:10</span></div><div class="c g" style="left:487px;top:140px"><i class="flag"></i>01A<br><span class="tm">09:55</span><br><span class="tm">18:11</span></div><div class="c g" style="left:532px;top:140px">01A<br><span class="tm">08:56</span><br><span class="tm">18:12</span></div><div class="c g" style="left:577px;top:140px">01A<br><span class="tm">08:57</span><br><span class="tm">18:13</span></div><div class="c b" style="left:622px;top:140px">90A</div><div class="c b" style="left:667px;top:140px">90A</div><div class="c g" style="left:713px;top:140px"><i class="ball gb"></i><span style="margin-left:13px">01A</span><br><span class="tm">09:22</span></div><div class="c g" style="left:757px;top:140px">01A</div><div class="c g" style="left:802px;top:140px">01A</div><div class="c g" style="left:847px;top:140px">01A</div><div class="c g" style="left:892px;top:140px">01A</div><div class="c b" style="left:937px;top:140px">90A</div><div class="c b" style="left:982px;top:140px">90A</div><div class="c g" style="left:1027px;top:140px">01A</div><div class="c g" style="left:1072px;top:140px">01A</div><div class="c g" style="left:1117px;top:140px">01A</div><div class="c g" style="left:1162px;top:140px">01A</div><div class="c g" style="left:1207px;top:140px">01A</div><div class="c b" style="left:1252px;top:140px">90A</div><div class="c b" style="left:1297px;top:140px">90A</div><div class="c g" style="left:1342px;top:140px">01A</div><div class="c g" style="left:1387px;top:140px">01A</div><div class="c g" style="left:1432px;top:140px">01A</div><div class="c g" style="left:1477px;top:140px">01A</div><div class="c g" style="left:127px;top:212px">01A<br><i class="lf" style="background:#ff00ff"></i><span class="lt">AT</span></div><div class="c g" style="left:172px;top:212px">01A<br><span class="tm">08:24</span><br><span class="tm">18:10</span></div><div class="c g" style="left:217px;top:212px">01A<br><span class="tm">08:25</span><br><span class="tm">18:11</span></div><div class="c g" style="left:262px;top:212px">01A<br><span class="tm">08:26</span><br><span class="tm">18:12</span></div><div class="c b" style="left:307px;top:212px">90A</div><div class="c b" style="left:352px;top:212px">90A</div><div class="c g" style="left:397px;top:212px">01A<br><span class="tm">08:27</span><br><span class="tm">18:13</span></div><div class="c g" style="left:442px;top:212px">01A<br><span class="tm">08:28</span><br><span class="tm">18:14</span></div><div class="c g" style="left:487px;top:212px">01A<br><span class="tm">09:29</span><br><span class="tm">18:15</span></div><div class="c g" style="left:532px;top:212px">01A<br><span class="tm">08:30</span><br><span class="tm">18:16</span></div><div class="c g" style="left:577px;top:212px">01A<br><span class="tm">08:31</span><br><span class="tm">18:17</span></div><div class="c b" style="left:622px;top:212px">90A</div><div class="c b" style="left:667px;top:212px">90A</div><div class="c g" style="left:713px;top:212px"><i class="ball gb"></i><span style="margin-left:13px">01A</span><br><span class="tm">09:24</span></div><div class="c g" style="left:757px;top:212px">01A</div><div class="c g" style="left:802px;top:212px">01A</div><div class="c g" style="left:847px;top:212px">01A</div><div class="c g" style="left:892px;top:212px">01A</div><div class="c b" style="left:937px;top:212px">90A</div><div class="c b" style="left:982px;top:212px">90A</div><div class="c g" style="left:1027px;top:212px">01A</div><div class="c g" style="left:1072px;top:212px">01A</div><div class="c g" style="left:1117px;top:212px">01A</div><div class="c g" style="left:1162px;top:212px">01A</div><div class="c g" style="left:1207px;top:212px">01A</div><div class="c b" style="left:1252px;top:212px">90A</div><div class="c b" style="left:1297px;top:212px">90A</div><div class="c g" style="left:1342px;top:212px">01A</div><div class="c g" style="left:1387px;top:212px">01A</div><div class="c g" style="left:1432px;top:212px">01A</div><div class="c g" style="left:1477px;top:212px">01A</div><div class="c g" style="left:127px;top:284px">01A<br><i class="lf" style="background:#ff00ff"></i><span class="lt">AT</span></div><div class="c g" style="left:172px;top:284px">01A<br><span class="tm">08:55</span><br><span class="tm">17:49</span></div><div class="c g" style="left:217px;top:284px">01A<br><span class="tm">08:56</span><br><span class="tm">17:50</span></div><div class="c g" style="left:262px;top:284px">01A<br><span class="tm">08:57</span><br><span class="tm">17:51</span></div><div class="c b" style="left:307px;top:284px">90A</div><div class="c b" style="left:352px;top:284px">90A</div><div class="c g" style="left:397px;top:284px">01A<br><span class="tm">08:58</span><br><span class="tm">17:52</span></div><div class="c g" style="left:442px;top:284px">01A<br><span class="tm">08:59</span><br><span class="tm">17:53</span></div><div class="c g" style="left:487px;top:284px">01A<br><span class="tm">09:00</span><br><span class="tm">17:54</span></div><div class="c g" style="left:532px;top:284px">01A<br><span class="tm">09:01</span><br><span class="tm">17:55</span></div><div class="c g" style="left:577px;top:284px">01A<br><span class="tm">09:02</span><br><span class="tm">17:56</span></div><div class="c b" style="left:622px;top:284px">90A</div><div class="c b" style="left:667px;top:284px">90A</div><div class="c g" style="left:713px;top:284px"><i class="ball rb"></i><span style="margin-left:13px">01A</span></div><div class="c g" style="left:757px;top:284px">01A</div><div class="c g" style="left:802px;top:284px">01A</div><div class="c g" style="left:847px;top:284px">01A</div><div class="c g" style="left:892px;top:284px">01A</div><div class="c b" style="left:937px;top:284px">90A</div><div class="c b" style="left:982px;top:284px">90A</div><div class="c g" style="left:1027px;top:284px">01A</div><div class="c g" style="left:1072px;top:284px">01A</div><div class="c g" style="left:1117px;top:284px">01A</div><div class="c g" style="left:1162px;top:284px">01A</div><div class="c g" style="left:1207px;top:284px">01A</div><div class="c b" style="left:1252px;top:284px">90A</div><div class="c b" style="left:1297px;top:284px">90A</div><div class="c g" style="left:1342px;top:284px">01A</div><div class="c g" style="left:1387px;top:284px">01A</div><div class="c g" style="left:1432px;top:284px">01A</div><div class="c g" style="left:1477px;top:284px">01A</div><div class="c g" style="left:127px;top:356px">01A<br><i class="lf" style="background:#ff00ff"></i><span class="lt">AT</span></div><div class="c g" style="left:172px;top:356px">01A<br><span class="tm">08:24</span><br><span class="tm">18:10</span></div><div class="c g" style="left:217px;top:356px">01A<br><span class="tm">08:25</span><br><span class="tm">18:11</span></div><div class="c g" style="left:262px;top:356px">01A<br><span class="tm">08:26</span><br><span class="tm">18:12</span></div><div class="c b" style="left:307px;top:356px">90A</div><div class="c b" style="left:352px;top:356px">90A</div><div class="c g" style="left:397px;top:356px">01A<br><i class="lf" style="background:#00ff00"></i><span class="lt">AH</span></div><div class="c g" style="left:442px;top:356px">01A<br><i class="lf" style="background:#00ff00"></i><span class="lt">AH</span></div><div class="c g" style="left:487px;top:356px">01A<br><i class="lf" style="background:#00ff00"></i><span class="lt">AH</span></div><div class="c g" style="left:532px;top:356px">01A<br><i class="lf" style="background:#00ff00"></i><span class="lt">AH</span></div><div class="c g" style="left:577px;top:356px">01A<br><i class="lf" style="background:#00ff00"></i><span class="lt">AH</span></div><div class="c b" style="left:622px;top:356px">90A</div><div class="c b" style="left:667px;top:356px">90A</div><div class="c g" style="left:713px;top:356px"><i class="ball rb"></i><span style="margin-left:13px">01A</span><br><i class="lf" style="background:#00ff00"></i><span class="lt">AH</span></div><div class="c g" style="left:757px;top:356px">01A</div><div class="c g" style="left:802px;top:356px">01A</div><div class="c g" style="left:847px;top:356px">01A</div><div class="c g" style="left:892px;top:356px">01A</div><div class="c b" style="left:937px;top:356px">90A</div><div class="c b" style="left:982px;top:356px">90A</div><div class="c g" style="left:1027px;top:356px">01A<br><i class="lf" style="background:#00ff00"></i><span class="lt">AH</span></div><div class="c g" style="left:1072px;top:356px">01A<br><i class="lf" style="background:#00ff00"></i><span class="lt">AH</span></div><div class="c g" style="left:1117px;top:356px">01A<br><i class="lf" style="background:#00ff00"></i><span class="lt">AH</span></div><div class="c g" style="left:1162px;top:356px">01A<br><i class="lf" style="background:#00ff00"></i><span class="lt">AH</span></div><div class="c g" style="left:1207px;top:356px">01A<br><i class="lf" style="background:#00ff00"></i><span class="lt">AH</span></div><div class="c b" style="left:1252px;top:356px">90A</div><div class="c b" style="left:1297px;top:356px">90A</div><div class="c g" style="left:1342px;top:356px">01A</div><div class="c g" style="left:1387px;top:356px">01A</div><div class="c g" style="left:1432px;top:356px">01A</div><div class="c g" style="left:1477px;top:356px">01A</div><div class="c g" style="left:127px;top:428px">01A<br><i class="lf" style="background:#ff00ff"></i><span class="lt">AT</span></div><div class="c g" style="left:172px;top:428px">01A<br><span class="tm">08:27</span><br><span class="tm">18:18</span></div><div class="c g" style="left:217px;top:428px">01A<br><span class="tm">08:28</span><br><span class="tm">18:19</span></div><div class="c g" style="left:262px;top:428px">01A<br><span class="tm">08:29</span><br><span class="tm">18:20</span></div><div class="c b" style="left:307px;top:428px">90A</div><div class="c b" style="left:352px;top:428px">90A</div><div class="c g" style="left:397px;top:428px">01A<br><span class="tm">08:30</span><br><span class="tm">18:21</span></div><div class="c g" style="left:442px;top:428px">01A<br><span class="tm">08:31</span><br><span class="tm">18:22</span></div><div class="c g" style="left:487px;top:428px">01A<br><span class="tm">08:32</span><br><span class="tm">18:23</span></div><div class="c g" style="left:532px;top:428px">01A<br><span class="tm">08:33</span><br><span class="tm">18:24</span></div><div class="c g" style="left:577px;top:428px">01A<br><span class="tm">08:34</span><br><span class="tm">18:25</span></div><div class="c b" style="left:622px;top:428px">90A</div><div class="c b" style="left:667px;top:428px">90A</div><div class="c g" style="left:713px;top:428px"><i class="ball rb"></i><span style="margin-left:13px">01A</span></div><div class="c g" style="left:757px;top:428px">01A</div><div class="c g" style="left:802px;top:428px">01A</div><div class="c g" style="left:847px;top:428px">01A</div><div class="c g" style="left:892px;top:428px">01A</div><div class="c b" style="left:937px;top:428px">90A</div><div class="c b" style="left:982px;top:428px">90A</div><div class="c g" style="left:1027px;top:428px">01A<br><i class="lf" style="background:#3366ff"></i><span class="lt">BTA</span></div><div class="c g" style="left:1072px;top:428px">01A<br><i class="lf" style="background:#3366ff"></i><span class="lt">BTA</span></div><div class="c g" style="left:1117px;top:428px">01A<br><i class="lf" style="background:#3366ff"></i><span class="lt">BTA</span></div><div class="c g" style="left:1162px;top:428px">01A</div><div class="c g" style="left:1207px;top:428px">01A</div><div class="c b" style="left:1252px;top:428px">90A</div><div class="c b" style="left:1297px;top:428px">90A</div><div class="c g" style="left:1342px;top:428px">01A</div><div class="c g" style="left:1387px;top:428px">01A</div><div class="c g" style="left:1432px;top:428px">01A</div><div class="c g" style="left:1477px;top:428px">01A</div><div class="bl" style="left:712px;top:0;height:67px;width:1px"></div><div class="bl" style="left:712px;top:66px;height:2px;width:45px"></div><div class="bl" style="left:756px;top:0;height:66px;width:1px;background:#ff5a00"></div><i class="flag" style="left:747px;top:0;position:absolute;border-top-width:9px;border-left-width:9px"></i><div style="left:893px;top:67px;width:43px;height:2px;background:#fff"></div><div class="bl" style="left:801px;top:0;height:67px;width:1px"></div><div class="bl" style="left:846px;top:0;height:67px;width:1px"></div><div class="bl" style="left:891px;top:0;height:67px;width:1px"></div></div><div class="sthumb"></div><svg style="left:8px;top:614px" width="11" height="12" viewBox="0 0 11 12"><rect x="0.4" y="0.5" width="2" height="11" fill="#c6c6c6"/><path d="M10.4 0.6 V11.4 L3.4 6Z" fill="#c6c6c6"/></svg>
<svg style="left:31px;top:614px" width="7" height="12" viewBox="0 0 7 12"><path d="M6.6 0.6 V11.4 L0.4 6Z" fill="#c6c6c6"/></svg>
<div class="bsep" style="left:49px"></div>
<div class="blbl" style="left:58px">Page</div>
<div class="binp"><span>1</span></div>
<div class="blbl" style="left:128px">of 2</div>
<div class="bsep" style="left:155px"></div>
<svg style="left:167px;top:614px" width="7" height="12" viewBox="0 0 7 12"><path d="M0.4 0.6 V11.4 L6.6 6Z" fill="#2466d8"/></svg>
<svg style="left:186px;top:614px" width="12" height="12" viewBox="0 0 12 12"><path d="M0.6 0.6 V11.4 L7.4 6Z" fill="#2466d8"/><rect x="8.2" y="0.5" width="2.2" height="11" fill="#2466d8"/></svg>
<div class="bsep" style="left:206px"></div>
<svg style="left:213px;top:612px" width="16" height="16" viewBox="0 0 16 16" fill="none" stroke="#2f7be0" stroke-width="2.2"><path d="M2.2 7 A5.6 5 0 0 1 12.6 5.4"/><path d="M13.8 9 A5.6 5 0 0 1 3.4 10.6"/><path d="M10 6.4 L14.8 6.8 L14.4 2" fill="#2f7be0" stroke="none"/><path d="M6 9.6 L1.2 9.2 L1.6 14" fill="#2f7be0" stroke="none"/></svg>
<div class="bsep" style="left:235px"></div>
<div class="bsep" style="left:260px"></div>
<div class="blbl" style="left:265px;font-weight:bold;color:#111;letter-spacing:.22px">No calculation in progress</div>
<div class="blbl" style="right:8px;color:#444">Displaying employee(s) 1 - 10 of 16</div>
<div class="menu">
<div class="msep"></div>
<div class="mhl"></div>
<div class="mhov"></div>
<div class="mi" style="top:7.0px">Add booking</div>
<svg style="left:7px;top:6.5px" width="16" height="16" viewBox="0 0 16 16"><circle cx="8" cy="8.4" r="7.2" fill="#e6e6e6" stroke="#c2c2c2" stroke-width=".8"/><circle cx="8" cy="8.2" r="5.6" fill="#d3edfb" stroke="#9ec4da" stroke-width=".6"/><path d="M5.3 6.8 L8 8.6 L11 6.9" stroke="#333" stroke-width="1" fill="none"/><g fill="#8fb4c8"><rect x="7.6" y="3.2" width=".8" height="1.2"/><rect x="7.6" y="12" width=".8" height="1.2"/><rect x="3" y="7.8" width="1.2" height=".8"/><rect x="11.8" y="7.8" width="1.2" height=".8"/></g></svg>
<div class="mi" style="top:32.0px">Add absence</div>
<svg style="left:7px;top:31.5px" width="16" height="16" viewBox="0 0 16 16"><path d="M8.6 15 C8.6 11.4 9.8 10 12.2 10 C14.6 10 15.8 11.4 15.8 15 Z" fill="#ee1111"/><ellipse cx="12.2" cy="7.2" rx="2" ry="2.4" fill="#c89a7a"/><path d="M9.6 8 C8.8 3.4 10.6 2 12.2 2 C13.9 2 15.6 3.4 14.8 8 C14.4 6.4 13.6 5.8 12.2 5.8 C10.8 5.8 10 6.4 9.6 8Z" fill="#0a0a0a"/><path d="M10.6 9.6 L12.2 11.4 L13.8 9.6Z" fill="#fff" opacity=".6"/><circle cx="5.2" cy="11.4" r="4.4" fill="#f4f4f4" stroke="#333" stroke-width=".9"/><circle cx="5.2" cy="11.4" r="3.3" fill="#ee1111"/><path d="M3.4 10 L5.2 11.5 L7.4 12.4" stroke="#fff" stroke-width="1" fill="none"/></svg>
<div class="mi" style="top:57.0px">Absence operations</div>
<svg style="left:7px;top:56.5px" width="16" height="16" viewBox="0 0 16 16"><path d="M8.6 15 C8.6 11.4 9.8 10 12.2 10 C14.6 10 15.8 11.4 15.8 15 Z" fill="#ee1111"/><ellipse cx="12.2" cy="7.2" rx="2" ry="2.4" fill="#c89a7a"/><path d="M9.6 8 C8.8 3.4 10.6 2 12.2 2 C13.9 2 15.6 3.4 14.8 8 C14.4 6.4 13.6 5.8 12.2 5.8 C10.8 5.8 10 6.4 9.6 8Z" fill="#0a0a0a"/><path d="M10.6 9.6 L12.2 11.4 L13.8 9.6Z" fill="#fff" opacity=".6"/><circle cx="5.2" cy="11.4" r="4.4" fill="#f4f4f4" stroke="#333" stroke-width=".9"/><circle cx="5.2" cy="11.4" r="3.3" fill="#ee1111"/><path d="M3.4 10 L5.2 11.5 L7.4 12.4" stroke="#fff" stroke-width="1" fill="none"/></svg>
<svg style="left:150.6px;top:61.0px" width="6" height="9" viewBox="0 0 6 9"><path d="M0.5 0.5 L5.2 4.5 L0.5 8.5Z" fill="#4f94e8" stroke="#2f6fc8" stroke-width=".6"/></svg>
<div class="mi" style="top:82.0px">Grant request</div>
<svg style="left:7px;top:81.5px" width="16" height="16" viewBox="0 0 16 16"><defs><radialGradient id="gk" cx="40%" cy="25%" r="80%"><stop offset="0" stop-color="#9bf07a"/><stop offset=".5" stop-color="#2fc81c"/><stop offset="1" stop-color="#0c8a06"/></radialGradient></defs><circle cx="8" cy="8" r="7.6" fill="url(#gk)"/><path d="M3.6 8.2 L6.8 11.4 L12.6 4.6" stroke="#fff" stroke-width="2.3" fill="none" stroke-linejoin="miter"/></svg>
<svg style="left:150.6px;top:86.0px" width="6" height="9" viewBox="0 0 6 9"><path d="M0.5 0.5 L5.2 4.5 L0.5 8.5Z" fill="#4f94e8" stroke="#2f6fc8" stroke-width=".6"/></svg>
<div class="mi" style="top:107.0px">Counters corrections</div>
<svg style="left:7px;top:106.5px" width="16" height="16" viewBox="0 0 16 16"><rect x="2.4" y="1.4" width="11.6" height="12.4" fill="#e4e8ee" stroke="#c09468" stroke-width=".8"/><rect x="2" y="13" width="12.6" height="1.8" fill="#c9925c"/><g stroke="#8e98a8" stroke-width=".7" stroke-dasharray="1.6 .5"><path d="M4 3.6h8.6M4 5.4h8.6M4 7.2h8.6M4 9h8.6M4 10.8h8.6"/></g><path d="M4.4 8.4 L5.5 10.8 L8.1 11.1 L6.2 12.8 L6.7 15.4 L4.4 14.1 L2.1 15.4 L2.6 12.8 L0.7 11.1 L3.3 10.8Z" fill="#fcc21b" stroke="#e89a00" stroke-width=".4"/></svg>
<svg style="left:150.6px;top:111.0px" width="6" height="9" viewBox="0 0 6 9"><path d="M0.5 0.5 L5.2 4.5 L0.5 8.5Z" fill="#4f94e8" stroke="#2f6fc8" stroke-width=".6"/></svg>
<div class="mi" style="top:132.0px">Send message</div>
<svg style="left:7px;top:131.5px" width="16" height="16" viewBox="0 0 16 16"><defs><radialGradient id="gm" cx="40%" cy="25%" r="80%"><stop offset="0" stop-color="#9bf07a"/><stop offset=".5" stop-color="#2fc81c"/><stop offset="1" stop-color="#0c8a06"/></radialGradient></defs><ellipse cx="8" cy="7" rx="7.6" ry="6.6" fill="url(#gm)"/><path d="M5 12.4 L4.2 15.8 L8.6 13Z" fill="#17a00e"/><rect x="7.1" y="2.6" width="1.9" height="6" rx=".6" fill="#fff"/><rect x="7.1" y="9.6" width="1.9" height="1.9" rx=".6" fill="#fff"/></svg>
<div class="mi" style="top:157.0px">Add note</div>
<svg style="left:7px;top:156.5px" width="16" height="16" viewBox="0 0 16 16"><g transform="rotate(-8 8 8)"><rect x="2.6" y="3.4" width="11" height="11" fill="#e8f0fb" stroke="#8fb0e8" stroke-width=".6"/><rect x="3.6" y="2.6" width="10.6" height="10.4" fill="#3b86f2"/><rect x="3.6" y="2.6" width="10.6" height="2.2" fill="#1a4fae"/><g fill="#0d2a6a"><rect x="4.6" y="1.4" width="1" height="2.6"/><rect x="6.6" y="1.4" width="1" height="2.6"/><rect x="8.6" y="1.4" width="1" height="2.6"/><rect x="10.6" y="1.4" width="1" height="2.6"/><rect x="12.6" y="1.4" width="1" height="2.6"/></g></g></svg>
<div class="mi" style="top:182.0px">Scheduler</div>
<svg style="left:7px;top:181.5px" width="16" height="16" viewBox="0 0 16 16"><rect x="1.5" y="3" width="12" height="10.5" fill="#b9bcc0" stroke="#8e9196" stroke-width=".6"/><path d="M1.5 1.6 H12 L15 3 L12 4.4 H1.5Z" fill="#8fd23a"/><path d="M1.5 1.6 H12 L15 3 H1.5Z" fill="#c4ee5a"/><g stroke="#e6e8ea" stroke-width=".7"><path d="M4.5 5v8M7.5 5v8M10.5 5v8M2 7.5h11M2 10.5h11"/></g><circle cx="11.6" cy="11.8" r="3.9" fill="#1fa01a" stroke="#0f7a0c" stroke-width=".5"/><path d="M10.7 9.8 H12.5 V11.6 H13.8 L11.6 14 L9.4 11.6 H10.7Z" fill="#fff"/></svg>
<div class="mi" style="top:207.0px">Change day program</div>
<svg style="left:7px;top:206.5px" width="16" height="16" viewBox="0 0 16 16"><rect x="3" y="2.6" width="12.4" height="11.4" fill="#b4babf"/><rect x="3" y="2.6" width="12.4" height="2.4" fill="#2b74d6"/><rect x="3" y="5" width="12.4" height="1.2" fill="#dfe8f2"/><g stroke="#c9ced2" stroke-width=".7"><path d="M6 6.5v7.5M9 6.5v7.5M12 6.5v7.5"/></g><path d="M0.8 11.2 C2.2 8.4 4.2 7.8 6 8 L6 6.4 L9 9 L6 11.4 L6 10 C4.2 9.8 2.6 10.2 0.8 11.2Z" fill="#3fb827" stroke="#2a9216" stroke-width=".4"/></svg>
<div class="mi" style="top:232.0px">Change cycle</div>
<svg style="left:7px;top:231.5px" width="16" height="16" viewBox="0 0 16 16"><path d="M8 1 A7 7 0 0 1 14.6 5.6 L15.6 5.2 L14.6 9 L11.6 6.6 L12.7 6.2 A5 5 0 0 0 8 3Z" fill="#3cc428"/><path d="M8 15 A7 7 0 0 1 1.4 10.4 L0.4 10.8 L1.4 7 L4.4 9.4 L3.3 9.8 A5 5 0 0 0 8 13Z" fill="#3cc428"/><path d="M1.6 5.4 A7 7 0 0 1 7 1.1 L7 3.1 A5 5 0 0 0 3.4 6.2Z" fill="#3cc428"/><path d="M14.4 10.6 A7 7 0 0 1 9 14.9 L9 12.9 A5 5 0 0 0 12.6 9.8Z" fill="#3cc428"/><circle cx="8" cy="8" r="4.3" fill="#e4e9f4" stroke="#8c94a6" stroke-width="1"/><path d="M6.4 6.6 L8 8.2 L9.8 7.2" stroke="#555" stroke-width=".8" fill="none"/></svg>
<div class="mi" style="top:257.0px">Recalculation</div>
<svg style="left:7px;top:256.5px" width="16" height="16" viewBox="0 0 16 16"><circle cx="8" cy="8" r="6.8" fill="#dcecf4" stroke="#27323c" stroke-width="1.7"/><text x="8" y="11.6" font-family="Liberation Sans" font-weight="bold" font-size="10" text-anchor="middle" fill="#e8951a">%</text></svg>
<div class="mi" style="top:282.0px">Reports</div>
<svg style="left:7px;top:281.5px" width="16" height="16" viewBox="0 0 16 16"><circle cx="7.5" cy="8" r="6.5" fill="#2a62ad"/><path d="M7.5 8 L10.6 2.3 A6.5 6.5 0 0 1 13.9 7 Z" fill="#2fa33a"/><path d="M7.5 8 L13.9 7 A6.5 6.5 0 0 1 13.8 9.7 Z" fill="#f02020"/><path d="M8 8.6 L14.3 8 L14.2 10.2 Z" fill="#f02020"/><path d="M7.5 8 L13.7 9.9 A6.5 6.5 0 0 1 3.6 13.2 Z" fill="#fbc81a"/></svg>
<svg style="left:150.6px;top:286.0px" width="6" height="9" viewBox="0 0 6 9"><path d="M0.5 0.5 L5.2 4.5 L0.5 8.5Z" fill="#4f94e8" stroke="#2f6fc8" stroke-width=".6"/></svg>
<div class="mi" style="top:312.5px">View timecard</div>
<svg style="left:7px;top:312.0px" width="16" height="16" viewBox="0 0 16 16"><path d="M2.5 1.5 H11.5 L13.5 3.5 V14.5 H2.5Z" fill="#fafafa" stroke="#cfd3d8" stroke-width=".7"/><rect x="3.2" y="4" width="9.6" height="2.6" fill="#6aa82e"/><circle cx="4.4" cy="5.3" r=".9" fill="#f7b21a"/><rect x="3.2" y="6.6" width="9.6" height="7.2" fill="#e6f2dc"/><g fill="#b5d69a"><rect x="4" y="7.6" width="3" height="1.2"/><rect x="4" y="9.6" width="3" height="1.2"/><rect x="4" y="11.6" width="3" height="1.2"/></g><g fill="#cfd6cf"><rect x="8" y="7.6" width="4" height="1.2"/><rect x="8" y="9.6" width="4" height="1.2"/><rect x="8" y="11.6" width="4" height="1.2"/></g></svg>
<div class="mi" style="top:337.5px">Yearly view</div>
<svg style="left:7px;top:337.0px" width="16" height="16" viewBox="0 0 16 16"><rect x="2" y="1.6" width="12" height="12.6" rx="1" fill="#fdfdfd" stroke="#a9adb3" stroke-width=".8"/><rect x="2.4" y="2" width="11.2" height="3" fill="#3e8cf0"/><rect x="2.4" y="2" width="11.2" height="1.2" fill="#78b4fa"/><rect x="2" y="14.2" width="12" height="1.2" fill="#6d7178"/><g fill="#f3701a"><rect x="4" y="7" width="2.2" height="1.8"/><rect x="7" y="7" width="2.2" height="1.8"/><rect x="10" y="7" width="2.2" height="1.8"/><rect x="4" y="10" width="2.2" height="1.8"/><rect x="7" y="10" width="2.2" height="1.8"/><rect x="10" y="10" width="2.2" height="1.8"/></g></svg>
<div class="mi" style="top:362.5px">View holiday card</div>
<svg style="left:7px;top:362.0px" width="16" height="16" viewBox="0 0 16 16"><ellipse cx="9" cy="14.2" rx="6.6" ry="1.6" fill="#e2b25a"/><path d="M11.4 14 C11.8 10 11 7 9.6 4.8 L10.8 4.4 C12.4 7 13 10.4 12.8 14Z" fill="#7a5230"/><path d="M10 5 C7.6 2.6 5 3 3.4 4.6 C5.6 4.2 7.6 4.6 10 5Z M10 5 C9 2 11.4 0.8 13.6 1.4 C12 2.2 11 3.4 10 5Z M10 5 C12.4 3.4 14.8 4.2 15.8 6 C14 5.2 12 5 10 5Z M10 5 C7.8 5.2 6.6 6.8 6.6 8.4 C7.6 6.8 8.6 5.8 10 5Z M10 5 C12 5.6 13.2 7.2 13 9 C12.2 7.2 11.2 6 10 5Z" fill="#2faa2a"/><circle cx="5.2" cy="11.2" r="3.9" fill="#f6f6f6" stroke="#999" stroke-width=".3"/><path d="M5.2 11.2 L5.2 7.3 A3.9 3.9 0 0 1 8.9 10 Z" fill="#f0242a"/><path d="M5.2 11.2 L8.9 10 A3.9 3.9 0 0 1 7.4 14.4Z" fill="#2660d8"/><path d="M5.2 11.2 L1.8 9.4 A3.9 3.9 0 0 1 5.2 7.3Z" fill="#fbd51a"/><path d="M5.2 11.2 L3 14.4 A3.9 3.9 0 0 1 1.8 9.4Z" fill="#2faa2a"/></svg>
<div class="mi" style="top:387.5px">View anomalies</div>
<svg style="left:7px;top:387.0px" width="16" height="16" viewBox="0 0 16 16"><circle cx="8" cy="8" r="6.4" fill="#d9d6ee" stroke="#e01414" stroke-width="2"/><rect x="7.1" y="3.8" width="1.9" height="5.4" rx=".7" fill="#d01010"/><rect x="7.1" y="10.2" width="1.9" height="1.9" rx=".7" fill="#d01010"/></svg>
<div class="mi" style="top:412.5px">Daily view</div>
<svg style="left:7px;top:412.0px" width="16" height="16" viewBox="0 0 16 16"><rect x="1.6" y="2.4" width="12.8" height="12" rx="1.2" fill="#fdfdfd" stroke="#8b9096" stroke-width=".9"/><path d="M2 3.4 a1 1 0 0 1 1 -1 H13 a1 1 0 0 1 1 1 V6 H2Z" fill="#4a88cc"/><g fill="#e8eef6" stroke="#5a6068" stroke-width=".4"><rect x="4" y="0.8" width="1.4" height="3.2" rx=".6"/><rect x="7.3" y="0.8" width="1.4" height="3.2" rx=".6"/><rect x="10.6" y="0.8" width="1.4" height="3.2" rx=".6"/></g><text x="8" y="13.2" font-family="Liberation Sans" font-weight="bold" font-size="7.5" text-anchor="middle" fill="#222">1</text></svg>
<div class="mi" style="top:437.5px">View files</div>
<svg style="left:7px;top:437.0px" width="16" height="16" viewBox="0 0 16 16"><path d="M4 1.4 H10 L12.6 4 V9 H4Z" fill="#fbfbfb" stroke="#d4d4d4" stroke-width=".6"/><path d="M1.4 6 H6 L7 7 H14.6 V14.6 H1.4Z" fill="#f4b83e"/><path d="M1.4 8 H14.6 V14.6 H1.4Z" fill="#fad27a"/><path d="M1.4 11 H14.6 V14.6 H1.4Z" fill="#f6bf4c"/><rect x="10.4" y="10.6" width="4" height="4.2" fill="#8aa0b4"/><path d="M11 11.2 L13.8 14.2 M13.8 11.2 L11 14.2" stroke="#3a5a7a" stroke-width=".7"/></svg>
<div class="mi" style="top:462.5px">View booking locations</div>
<svg style="left:7px;top:462.0px" width="16" height="16" viewBox="0 0 16 16"><path d="M8.4 9 L12 4.4" stroke="#777" stroke-width="1.3"/><path d="M10.4 3.2 L13.4 0.8 L15.4 3.4 L12.6 5.8Z" fill="#ee1122"/><circle cx="6" cy="10.6" r="5" fill="#2a78d8"/><path d="M3 8 C4.4 6.4 6.4 6.6 7 7.6 C7.2 8.8 5.8 9.2 5.6 10.4 C5.4 11.8 6.8 12.4 6.2 14 C5.2 14.8 3.6 14 3.4 12.6 C3.2 11.2 2 10.6 1.6 9.6Z" fill="#3cb828"/><path d="M8.4 8.4 C9.6 8.6 10.6 9.8 10.8 11.2 C10 11.6 9 11 8.6 10Z" fill="#3cb828"/></svg>
<svg style="left:64px;top:349px" width="19" height="25" viewBox="0 0 19 25"><path d="M6 2.2 a1.5 1.5 0 0 1 3 0 V9.6 a1.3 1.3 0 0 1 2.6 0 V10.4 a1.3 1.3 0 0 1 2.6 0 V11.2 a1.3 1.3 0 0 1 2.6 0 V17.4 C16.8 20.6 15.2 22 14.4 24.2 H7 C5.6 21.2 3 18.2 1 15.4 C0.4 13.8 2.4 13.2 3.6 14.4 L6 16.8 Z" fill="#fff" stroke="#14142a" stroke-width="1.2" stroke-linejoin="round"/><path d="M9 9.6V13.4M11.6 10.4V13.6M14.2 11.2V13.8" stroke="#14142a" stroke-width="1"/></svg>
</div>
</body></html>
